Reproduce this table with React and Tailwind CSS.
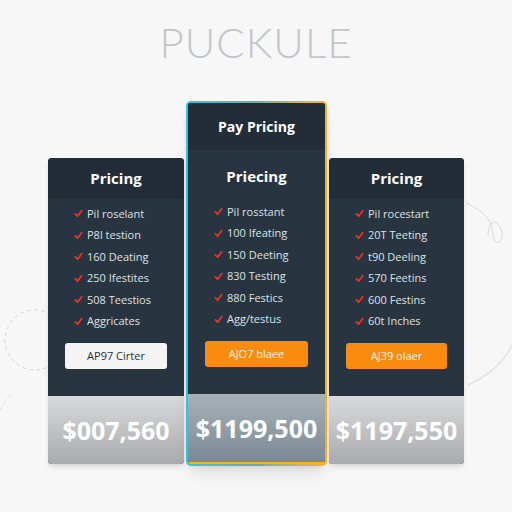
const plans = [
  {
    title: 'Pricing',
    features: ['Pil roselant', 'P8l testion', '160 Deating', '250 Ifestites', '508 Teestios', 'Aggricates'],
    button: 'AP97 Cirter',
    price: '$007,560',
    light: true,
  },
  {
    top: 'Pay Pricing',
    title: 'Priecing',
    features: ['Pil rosstant', '100 Ifeating', '150 Deeting', '830 Testing', '880 Festics', 'Agg/testus'],
    button: 'AJO7 blaee',
    price: '$1199,500',
  },
  {
    title: 'Pricing',
    features: ['Pil rocestart', '20T Teeting', 't90 Deeling', '570 Feetins', '600 Festins', '60t Inches'],
    button: 'AJ39 olaer',
    price: '$1197,550',
  },
];

function Check() {
  return (
    <svg width="9" height="9" viewBox="0 0 10 10" className="shrink-0">
      <polyline points="1.5,5.5 4,8 8.5,2" fill="none" stroke="#e8352b" strokeWidth="2" strokeLinecap="round" strokeLinejoin="round" />
    </svg>
  );
}

function Body({ plan, featured }) {
  return (
    <>
      <ul className="pt-[4px] pl-[26px]">
        {plan.features.map((f) => (
          <li key={f} className="h-[21.5px] flex items-center gap-[4px] text-[11px] text-[#dde2e6] font-medium">
            <Check />
            <span>{f}</span>
          </li>
        ))}
      </ul>
      <div className="mt-[10px] px-[17px]">
        <button
          className={
            plan.light
              ? 'w-full h-[26px] rounded-[3px] bg-[#f4f4f5] text-[#2c2f33] text-[11px] font-medium'
              : 'w-full h-[26px] rounded-[3px] bg-[#f98b10] text-[#fff6e6] text-[11px] font-medium'
          }
        >
          {plan.button}
        </button>
      </div>
      <div
        className={
          featured
            ? 'mt-[27px] h-[68px] flex items-center justify-center bg-gradient-to-b from-[#a7b1b8] to-[#7c8a96] text-white text-[25px] font-bold'
            : 'mt-[27px] h-[68px] flex items-center justify-center bg-gradient-to-b from-[#d9dadc] to-[#a8aaad] text-white text-[25px] font-bold'
        }
      >
        {plan.price}
      </div>
    </>
  );
}

function SideCard({ plan, width }) {
  return (
    <div className={`${width} rounded-[4px] overflow-hidden bg-[#28343f] shadow-md`}>
      <div className="h-[41px] flex items-center justify-center bg-[#222d38] text-white text-[15px] font-bold">
        {plan.title}
      </div>
      <Body plan={plan} />
    </div>
  );
}

function FeaturedCard({ plan }) {
  return (
    <div className="w-[141px] rounded-[5px] p-[2px] bg-gradient-to-r from-[#31c3e0] via-[#6fa9a0] to-[#f7b318] shadow-lg">
      <div className="rounded-[3px] overflow-hidden bg-[#28343f] border-b-[2px] border-[#f7b318]">
        <div className="h-[47px] flex items-center justify-center bg-[#222d38] text-white text-[14px] font-bold">
          {plan.top}
        </div>
        <div className="h-[47px] pt-[6px] flex items-center justify-center text-white text-[15px] font-bold">
          {plan.title}
        </div>
        <Body plan={plan} featured />
      </div>
    </div>
  );
}

export default function App() {
  return (
    <div className="relative w-[512px] h-[512px] overflow-hidden bg-[#f7f7f7] font-['Open_Sans',sans-serif]">
      <svg className="absolute inset-0" width="512" height="512">
        <circle cx="35" cy="340" r="30" fill="none" stroke="#d4d4d4" strokeWidth="1" strokeDasharray="4 3" />
        <path d="M466 203 C478 208 486 215 490 222 C494 230 492 240 496 242 C503 244 505 232 498 224 C492 218 488 228 488 236" fill="none" stroke="#cfcfcf" strokeWidth="0.8" />
        <path d="M468 385 C490 375 505 360 512 345" fill="none" stroke="#e2e2e2" strokeWidth="1.5" />
        <path d="M0 410 C4 402 8 398 12 395" fill="none" stroke="#e2e2e2" strokeWidth="1" />
      </svg>
      <div className="relative flex flex-col items-center">
        <h1 className="h-[84px] leading-[84px] text-[42px] font-light tracking-[1px] text-[#c3c5c8] font-['Lato',sans-serif]">
          PUCKULE
        </h1>
        <div className="mt-[17px] flex items-end justify-center gap-[2px]">
          <div className="mb-[2px]">
            <SideCard plan={plans[0]} width="w-[136px]" />
          </div>
          <FeaturedCard plan={plans[1]} />
          <div className="mb-[2px]">
            <SideCard plan={plans[2]} width="w-[135px]" />
          </div>
        </div>
      </div>
    </div>
  );
}
